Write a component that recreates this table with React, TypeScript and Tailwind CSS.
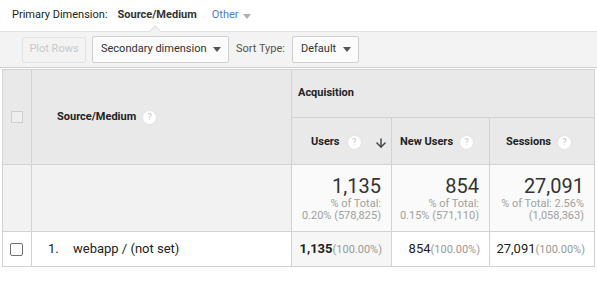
import { ArrowDown } from "lucide-react";

function Help() {
  return (
    <span className="inline-flex h-[13px] w-[13px] items-center justify-center rounded-full bg-white text-[9px] font-normal leading-none text-[#c4c4c4] shadow-[0_0_0_1px_#e4e4e4]">
      ?
    </span>
  );
}

function Caret({ color = "#555" }: { color?: string }) {
  return (
    <svg width="8" height="5" viewBox="0 0 8 5">
      <path d="M0 0h8L4 5z" fill={color} />
    </svg>
  );
}

export default function App() {
  const totals = [
    { value: "1,135", line1: "% of Total:", line2: "0.20% (578,825)" },
    { value: "854", line1: "% of Total:", line2: "0.15% (571,110)" },
    { value: "27,091", line1: "% of Total: 2.56%", line2: "(1,058,363)" },
  ];

  return (
    <div className="h-[284px] w-[597px] overflow-hidden bg-white font-['Roboto',sans-serif] text-[#222]">
      {/* Primary dimension */}
      <div className="flex h-[31px] items-center pl-3 text-[11px]">
        <span className="text-[#222]">Primary Dimension:</span>
        <span className="ml-[10px] font-bold text-[#333]">Source/Medium</span>
        <span className="ml-[15px] text-[#4a7ec5]">Other</span>
        <span className="ml-[4px] mt-[1px]">
          <Caret color="#b0b0b0" />
        </span>
      </div>

      {/* Toolbar */}
      <div className="relative flex h-[37px] items-center whitespace-nowrap border-t border-b border-t-[#e2e2e2] border-b-[#cfcfcf] bg-[#f3f3f3] pl-[22px] text-[11px]">
        <div className="absolute left-[151px] top-[-5px] h-[8px] w-[8px] rotate-45 border-l border-t border-[#e2e2e2] bg-[#f3f3f3]" />
        <button className="h-[26px] w-[64px] shrink-0 rounded-[2px] border border-[#e3e3e3] bg-[#f3f3f3] text-[#c9c9c9]">
          Plot Rows
        </button>
        <button className="ml-[6px] flex h-[27px] w-[137px] shrink-0 items-center justify-between rounded-[2px] border border-[#cfcfcf] bg-[#fbfbfb] pl-[8px] pr-[7px] text-[#333]">
          <span>Secondary dimension</span>
          <Caret />
        </button>
        <span className="ml-[7px] text-[#555]">Sort Type:</span>
        <button className="ml-[7px] flex h-[27px] w-[67px] shrink-0 items-center justify-between rounded-[2px] border border-[#cfcfcf] bg-[#fbfbfb] pl-[8px] pr-[7px] text-[#333]">
          <span>Default</span>
          <Caret />
        </button>
      </div>

      {/* Table */}
      <table className="ml-[2px] mt-[1px] w-[592px] table-fixed border-collapse text-[11px]">
        <colgroup>
          <col className="w-[29px]" />
          <col className="w-[260px]" />
          <col className="w-[100px]" />
          <col className="w-[98px]" />
          <col className="w-[105px]" />
        </colgroup>
        <thead>
          <tr className="h-[48px] bg-[#e9e9e9]">
            <th rowSpan={2} className="border border-[#d2d2d2] p-0">
              <div className="mx-auto h-[12px] w-[12px] border border-[#cfcfcf] bg-[#eeeeee]" />
            </th>
            <th rowSpan={2} className="border border-[#d2d2d2] pl-[25px] text-left">
              <div className="flex items-center gap-[7px] font-bold text-[#222]">
                Source/Medium
                <Help />
              </div>
            </th>
            <th colSpan={3} className="border border-[#d2d2d2] pl-[6px] text-left font-bold text-[#222]">
              Acquisition
            </th>
          </tr>
          <tr className="h-[47px] bg-[#e9e9e9] font-bold text-[#222]">
            <th className="border border-[#d2d2d2] pl-[19px] pr-[3px] pt-[3px]">
              <div className="flex items-center">
                Users
                <span className="ml-[8px]">
                  <Help />
                </span>
                <ArrowDown className="ml-auto h-[14px] w-[14px] text-[#444]" strokeWidth={2.5} />
              </div>
            </th>
            <th className="border border-[#d2d2d2] pl-[8px] pt-[3px]">
              <div className="flex items-center gap-[7px]">
                New Users
                <Help />
              </div>
            </th>
            <th className="border border-[#d2d2d2] pl-[16px] pt-[3px]">
              <div className="flex items-center gap-[7px]">
                Sessions
                <Help />
              </div>
            </th>
          </tr>
        </thead>
        <tbody>
          <tr className="h-[67px]">
            <td className="border border-[#d2d2d2] bg-[#f2f2f2]" />
            <td className="border border-[#d2d2d2] bg-[#f2f2f2]" />
            {totals.map((t) => (
              <td key={t.value} className="border border-[#d2d2d2] bg-[#fafafa] pr-[10px] text-right align-middle">
                <div className="text-[20px] leading-[22px] text-[#333]">{t.value}</div>
                <div className="mt-[1px] leading-[12px] text-[#a0a0a0]">{t.line1}</div>
                <div className="leading-[12px] text-[#a0a0a0]">{t.line2}</div>
              </td>
            ))}
          </tr>
          <tr className="h-[35px] text-[13px]">
            <td className="border border-[#d2d2d2] bg-white p-0">
              <div className="ml-[7px] h-[13px] w-[13px] rounded-[2px] border border-[#707070] bg-white" />
            </td>
            <td className="border border-[#d2d2d2] bg-white">
              <div className="flex">
                <span className="ml-[16px] w-[25px]">1.</span>
                <span>webapp / (not set)</span>
              </div>
            </td>
            <td className="border border-[#d2d2d2] bg-[#f6f6f6] pr-[9px] text-right">
              <span className="font-bold">1,135</span>
              <span className="text-[11px] text-[#999]">(100.00%)</span>
            </td>
            <td className="border border-[#d2d2d2] bg-white pr-[9px] text-right">
              <span>854</span>
              <span className="text-[11px] text-[#999]">(100.00%)</span>
            </td>
            <td className="border border-[#d2d2d2] bg-white pr-[9px] text-right">
              <span>27,091</span>
              <span className="text-[11px] text-[#999]">(100.00%)</span>
            </td>
          </tr>
        </tbody>
      </table>
    </div>
  );
}
